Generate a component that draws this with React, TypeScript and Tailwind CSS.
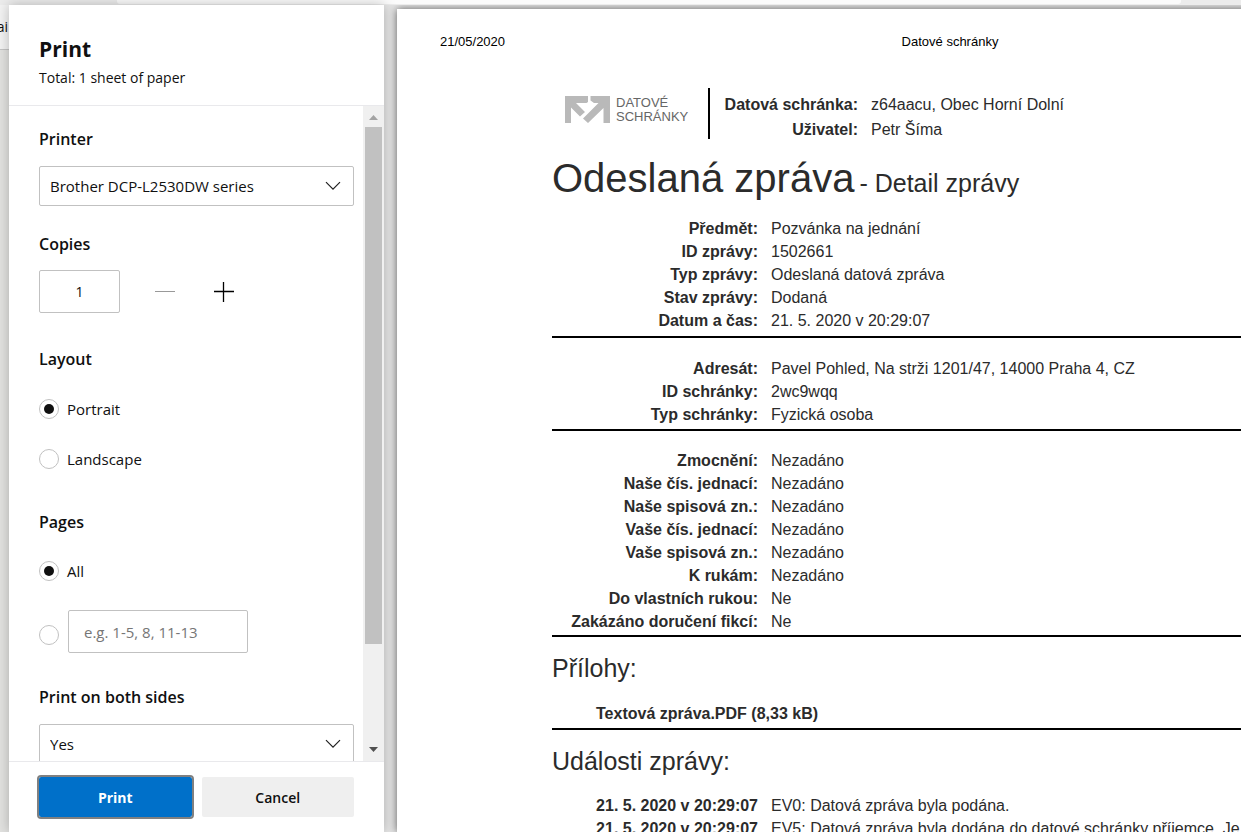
import { useState } from 'react'

interface DetailRow {
    label: string
    value: string
}

const messageRows: DetailRow[] = [
    { label: 'Předmět:', value: 'Pozvánka na jednání' },
    { label: 'ID zprávy:', value: '1502661' },
    { label: 'Typ zprávy:', value: 'Odeslaná datová zpráva' },
    { label: 'Stav zprávy:', value: 'Dodaná' },
    { label: 'Datum a čas:', value: '21. 5. 2020 v 20:29:07' },
]

const recipientRows: DetailRow[] = [
    { label: 'Adresát:', value: 'Pavel Pohled, Na strži 1201/47, 14000 Praha 4, CZ' },
    { label: 'ID schránky:', value: '2wc9wqq' },
    { label: 'Typ schránky:', value: 'Fyzická osoba' },
]

const referenceRows: DetailRow[] = [
    { label: 'Zmocnění:', value: 'Nezadáno' },
    { label: 'Naše čís. jednací:', value: 'Nezadáno' },
    { label: 'Naše spisová zn.:', value: 'Nezadáno' },
    { label: 'Vaše čís. jednací:', value: 'Nezadáno' },
    { label: 'Vaše spisová zn.:', value: 'Nezadáno' },
    { label: 'K rukám:', value: 'Nezadáno' },
    { label: 'Do vlastních rukou:', value: 'Ne' },
    { label: 'Zakázáno doručení fikcí:', value: 'Ne' },
]

const eventRows: DetailRow[] = [
    { label: '21. 5. 2020 v 20:29:07', value: 'EV0: Datová zpráva byla podána.' },
    { label: '21. 5. 2020 v 20:29:07', value: 'EV5: Datová zpráva byla dodána do datové schránky příjemce. Je' },
]

const radioClass =
    "grid size-5 shrink-0 appearance-none place-content-center rounded-full border border-[#c1c1c1] bg-white checked:before:size-[10px] checked:before:rounded-full checked:before:bg-[#101010] checked:before:content-['']"

function Details({ rows }: { rows: DetailRow[] }) {
    return (
        <dl>
            {rows.map((row, i) => (
                <div key={i} className="grid grid-cols-[206px_1fr] gap-x-[13px] text-[16px] leading-[23px]">
                    <dt className="text-right font-bold whitespace-nowrap">{row.label}</dt>
                    <dd className="whitespace-nowrap">{row.value}</dd>
                </div>
            ))}
        </dl>
    )
}

function SelectBox({ id, options }: { id: string; options: string[] }) {
    return (
        <div className="relative">
            <select
                id={id}
                className="h-10 w-full appearance-none rounded-[2px] border border-[#c1c1c1] bg-white px-[10px] text-[15px] text-[#101010]"
            >
                {options.map((option) => (
                    <option key={option}>{option}</option>
                ))}
            </select>
            <svg
                className="pointer-events-none absolute top-3 right-[13px] h-4 w-4"
                viewBox="0 0 16 16"
                fill="none"
                stroke="#202020"
                strokeWidth="1.2"
            >
                <path d="M1 4.2 8 11.2 15 4.2" />
            </svg>
        </div>
    )
}

function PrintPanel() {
    const [copies, setCopies] = useState(1)

    return (
        <aside className="z-10 flex w-[375px] shrink-0 flex-col bg-white font-['Open_Sans','Noto_Sans',sans-serif] text-[#101010] shadow-[0_0_12px_rgba(0,0,0,0.25)]">
            <header className="h-[101px] shrink-0 border-b border-[#e9e9ec] px-[30px] pt-[30px]">
                <h1 className="text-[21px] leading-[28px] font-bold">Print</h1>
                <p className="text-[14px] leading-[30px]">Total: 1 sheet of paper</p>
            </header>

            <div className="flex min-h-0 flex-1">
                <form className="min-w-0 flex-1 overflow-hidden pt-[21px] pr-[9px] pl-[30px]">
                    <label htmlFor="printer" className="block pb-[15px] text-[16px] leading-6 font-semibold">
                        Printer
                    </label>
                    <SelectBox id="printer" options={['Brother DCP-L2530DW series']} />

                    <label htmlFor="copies" className="block pt-[26px] pb-[14px] text-[16px] leading-6 font-semibold">
                        Copies
                    </label>
                    <div className="flex items-center">
                        <input
                            id="copies"
                            value={copies}
                            onChange={(e) => setCopies(Number(e.target.value) || 1)}
                            className="h-[43px] w-[81px] rounded-[2px] border border-[#c1c1c1] text-center text-[14px]"
                        />
                        <button
                            type="button"
                            aria-label="Fewer copies"
                            disabled={copies === 1}
                            onClick={() => setCopies(copies - 1)}
                            className="ml-[35px] text-black disabled:text-[#999]"
                        >
                            <svg className="h-5 w-5" viewBox="0 0 20 20" stroke="currentColor">
                                <path d="M0 9.5H20" />
                            </svg>
                        </button>
                        <button
                            type="button"
                            aria-label="More copies"
                            onClick={() => setCopies(copies + 1)}
                            className="ml-[39px] text-black"
                        >
                            <svg className="h-5 w-5" viewBox="0 0 20 20" stroke="currentColor" strokeWidth="1.3">
                                <path d="M0 9.5H20M9.5 0V20" />
                            </svg>
                        </button>
                    </div>

                    <fieldset className="pt-[34px]">
                        <legend className="float-left w-full pb-[28px] text-[16px] leading-6 font-semibold">Layout</legend>
                        <label className="clear-both flex items-center gap-2 text-[15px] leading-5">
                            <input type="radio" name="layout" defaultChecked className={radioClass} />
                            Portrait
                        </label>
                        <label className="mt-[30px] flex items-center gap-2 text-[15px] leading-5">
                            <input type="radio" name="layout" className={radioClass} />
                            Landscape
                        </label>
                    </fieldset>

                    <fieldset className="pt-[41px]">
                        <legend className="float-left w-full pb-[27px] text-[16px] leading-6 font-semibold">Pages</legend>
                        <label className="clear-both flex items-center gap-2 text-[15px] leading-5">
                            <input type="radio" name="pages" defaultChecked className={radioClass} />
                            All
                        </label>
                        <div className="mt-[29px] flex items-end gap-[9px]">
                            <div className="flex pb-2">
                                <input type="radio" name="pages" aria-label="Page range" className={radioClass} />
                            </div>
                            <input
                                aria-label="Pages to print"
                                placeholder="e.g. 1-5, 8, 11-13"
                                className="h-[43px] w-[180px] rounded-[2px] border border-[#c1c1c1] px-[15px] text-[15px] placeholder:text-[#767676]"
                            />
                        </div>
                    </fieldset>

                    <label htmlFor="sides" className="block pt-[32px] pb-[15px] text-[16px] leading-6 font-semibold">
                        Print on both sides
                    </label>
                    <SelectBox id="sides" options={['Yes', 'No']} />
                </form>

                {/* Scrollbar */}
                <div className="flex w-[21px] shrink-0 flex-col items-center bg-[#f0f0f0]">
                    <svg className="h-[21px] w-[17px] shrink-0" viewBox="0 0 17 21" fill="#a3a3a3">
                        <path d="M4 14 8.500 9 13 14Z" />
                    </svg>
                    <div className="h-[79%] w-[17px] bg-[#c1c1c1]" />
                    <svg className="mt-auto h-[21px] w-[17px] shrink-0" viewBox="0 0 17 21" fill="#505050">
                        <path d="M4 7 8.500 12 13 7Z" />
                    </svg>
                </div>
            </div>

            <footer className="flex h-[71px] shrink-0 items-start gap-[10px] border-t border-[#e9e9ec] px-[30px] pt-[15px] text-[14px] font-semibold">
                <button type="button" className="h-10 flex-1 rounded-[2px] bg-[#0070c9] font-bold text-white outline-2 outline-[#808080]">
                    Print
                </button>
                <button type="button" className="h-10 flex-1 rounded-[2px] bg-[#efefef]">
                    Cancel
                </button>
            </footer>
        </aside>
    )
}

function Logo() {
    return (
        <div className="flex items-start gap-[6px] pt-2 pl-[13px] text-[#666]">
            <svg className="h-[27px] w-[45px]" viewBox="0 0 45 27" fill="#b9b9b9">
                <path d="M0 0H23V6L21.500 7H11L20 16 15 20.500 6 11.500V27H0Z" />
                <path d="M25.500 0H45V27H38.500V12L23 27 18 22.500 33.500 7H29L25.500 4.500Z" />
            </svg>
            <div className="w-[92px] text-[13px] leading-[14px]">
                DATOVÉ
                <br />
                SCHRÁNKY
            </div>
        </div>
    )
}

function Preview() {
    return (
        <main className="flex min-w-0 flex-1 overflow-hidden bg-[#e6e6e6] pt-1 pl-[13px]">
            <article className="w-[1106px] shrink-0 bg-white font-['Liberation_Sans',Arial,sans-serif] text-[#2b2b2b] shadow-[0_0_8px_rgba(0,0,0,0.6)]">
                <div className="grid grid-cols-3 px-[43px] pt-[23px] text-[13px] leading-5 text-black">
                    <span>21/05/2020</span>
                    <span className="text-center">Datové schránky</span>
                </div>

                <div className="pr-[43px] pl-[155px]">
                    <div className="flex pt-[36px]">
                        <Logo />
                        <dl className="grid h-[51px] grid-cols-[148px_1fr] gap-x-[13px] border-l-2 border-black pt-1 text-[16px] leading-[25px] whitespace-nowrap">
                            <dt className="text-right font-bold">Datová schránka:</dt>
                            <dd>z64aacu, Obec Horní Dolní</dd>
                            <dt className="text-right font-bold">Uživatel:</dt>
                            <dd>Petr Šíma</dd>
                        </dl>
                    </div>

                    <h2 className="pt-[14px] text-[40px] leading-[50px]">
                        Odeslaná zpráva<span className="ml-[5px] text-[25px]">- Detail zprávy</span>
                    </h2>

                    <section className="border-b-2 border-black pt-[9px] pb-[4px]">
                        <Details rows={messageRows} />
                    </section>
                    <section className="border-b-2 border-black pt-[19px] pb-[3px]">
                        <Details rows={recipientRows} />
                    </section>
                    <section className="border-b-2 border-black pt-[18px] pb-[2px]">
                        <Details rows={referenceRows} />
                    </section>

                    <section className="border-b-2 border-black pt-4 pb-[3px]">
                        <h3 className="text-[25px] leading-[30px]">Přílohy:</h3>
                        <p className="pt-[19px] pl-11 text-[16px] leading-[23px] font-bold">Textová zpráva.PDF (8,33 kB)</p>
                    </section>

                    <section className="pt-4">
                        <h3 className="pb-[18px] text-[25px] leading-[30px]">Události zprávy:</h3>
                        <Details rows={eventRows} />
                    </section>
                </div>
            </article>
        </main>
    )
}

export default function App() {
    return (
        <div className="flex h-screen flex-col overflow-hidden bg-[#ececec]">
            {/* Bottom edge of the browser's tab strip */}
            <div className="flex h-[5px] shrink-0 pr-[60px] pl-[117px]">
                <div className="h-1 flex-1 rounded-b-[3px] bg-[#fbfbfb]" />
            </div>
            <div className="flex min-h-0 flex-1">
                <div className="flex w-[9px] shrink-0 flex-col bg-[#e2e2e0]">
                    <div className="flex h-[45px] justify-end overflow-hidden border-b border-[#c4c4c4] bg-[#f3f3f3] pt-3 pr-px font-['Open_Sans','Noto_Sans',sans-serif] text-[14px] leading-5 text-[#101010]">
                        ai
                    </div>
                </div>
                <PrintPanel />
                <Preview />
            </div>
        </div>
    )
}
